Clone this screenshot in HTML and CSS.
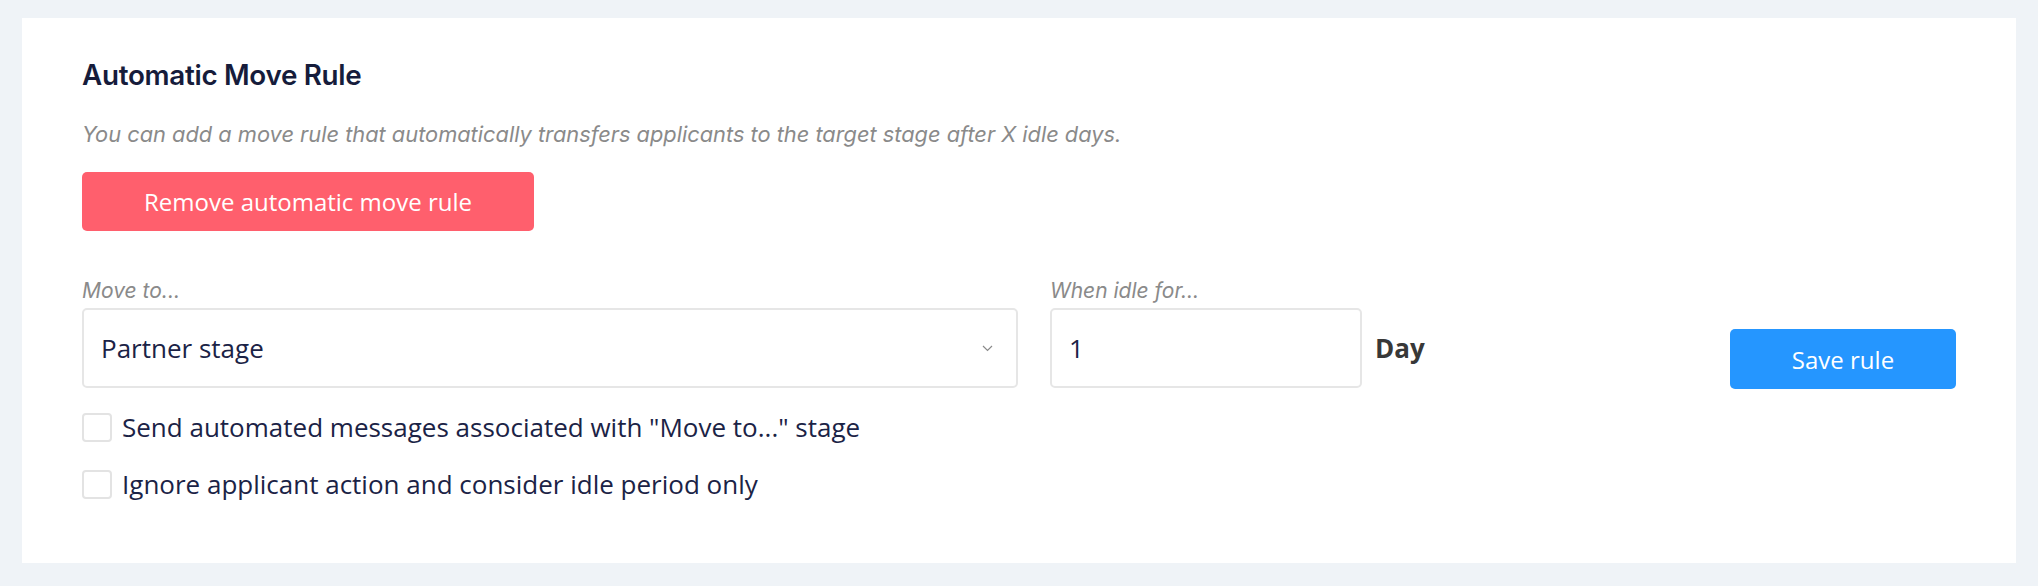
FILE: index.html
```html
<!DOCTYPE html>
<html>
<head>
<meta charset="utf-8">
<link rel="stylesheet" href="styles.css">
</head>
<body>
<div class="page">
  <div class="card">
    <h2 class="title">Automatic Move Rule</h2>
    <p class="desc">You can add a move rule that automatically transfers applicants to the target stage after X idle days.</p>
    <button class="btn btn-remove">Remove automatic move rule</button>
    <div class="fields">
      <div class="field field-stage">
        <label class="label">Move to...</label>
        <div class="control select">
          <span>Partner stage</span>
          <svg class="chev" width="11" height="7" viewBox="0 0 11 7"><path d="M1 1l4.5 4.5 4.5-4.5" fill="none" stroke="#8a8a8a" stroke-width="1.2"/></svg>
        </div>
      </div>
      <div class="field field-idle">
        <label class="label">When idle for...</label>
        <div class="control input"><span>1</span></div>
      </div>
      <div class="day">Day</div>
      <button class="btn btn-save">Save rule</button>
    </div>
    <div class="checks">
      <label class="check"><span class="box"></span><span>Send automated messages associated with "Move to..." stage</span></label>
      <label class="check"><span class="box"></span><span>Ignore applicant action and consider idle period only</span></label>
    </div>
  </div>
</div>
</body>
</html>
```
FILE: styles.css
```css
* { box-sizing: border-box; }
html, body { margin: 0; padding: 0; }
body { background: #eff3f7; width: 2038px; height: 586px; overflow: hidden; }
.page { padding: 18px 22px 23px 22px; }
.card {
  background: #fff;
  height: 545px;
  padding: 42px 60px 0 60px;
}
.title {
  margin: 0;
  font-family: Inter, "Liberation Sans", sans-serif;
  font-weight: 600;
  font-size: 27.8px;
  line-height: 30px;
  color: #161c3b;
  letter-spacing: -0.3px;
}
.desc {
  margin: 31px 0 0 0;
  font-family: Inter, "Liberation Sans", sans-serif;
  font-style: italic;
  font-size: 21.8px;
  line-height: 26px;
  color: #8a8a8a;
}
.btn {
  border: none;
  border-radius: 5px;
  color: #fff;
  font-family: "Open Sans", "Liberation Sans", sans-serif;
  font-size: 24px;
  font-weight: 400;
  cursor: pointer;
  padding: 0;
}
.btn-remove {
  display: block;
  margin-top: 25px;
  width: 452px;
  height: 59px;
  background: #ff5f6d;
}
.fields {
  display: flex;
  align-items: flex-end;
  margin-top: 47px;
}
.field { display: flex; flex-direction: column; gap: 4px; }
.field-stage { width: 936px; }
.field-idle { width: 312px; margin-left: 32px; }
.label {
  font-family: Inter, "Liberation Sans", sans-serif;
  font-style: italic;
  font-size: 21px;
  line-height: 26px;
  color: #8a8a8a;
}
.control {
  height: 80px;
  border: 2px solid #e6e6e6;
  border-radius: 5px;
  display: flex;
  align-items: center;
  font-family: "Open Sans", "Liberation Sans", sans-serif;
  font-size: 26px;
  color: #1b2346;
}
.select { padding: 0 23px 0 17px; justify-content: space-between; }
.input { padding: 0 17px; }
.day {
  margin-left: 13px;
  align-self: flex-end;
  height: 80px;
  display: flex;
  align-items: center;
  font-family: "Open Sans", "Liberation Sans", sans-serif;
  font-weight: 700;
  font-size: 26px;
  color: #383838;
}
.btn-save {
  margin-left: auto;
  width: 226px;
  height: 60px;
  background: #2596ff;
  margin-bottom: -1px;
}
.checks {
  margin-top: 23px;
  display: flex;
  flex-direction: column;
  gap: 24px;
}
.check {
  display: flex;
  align-items: center;
  gap: 10px;
  font-family: "Open Sans", "Liberation Sans", sans-serif;
  font-size: 26px;
  line-height: 33px;
  color: #1b2346;
}
.box {
  width: 30px;
  height: 29px;
  border: 2px solid #e3e3e3;
  border-radius: 4px;
  background: #fff;
  flex: none;
}
```
